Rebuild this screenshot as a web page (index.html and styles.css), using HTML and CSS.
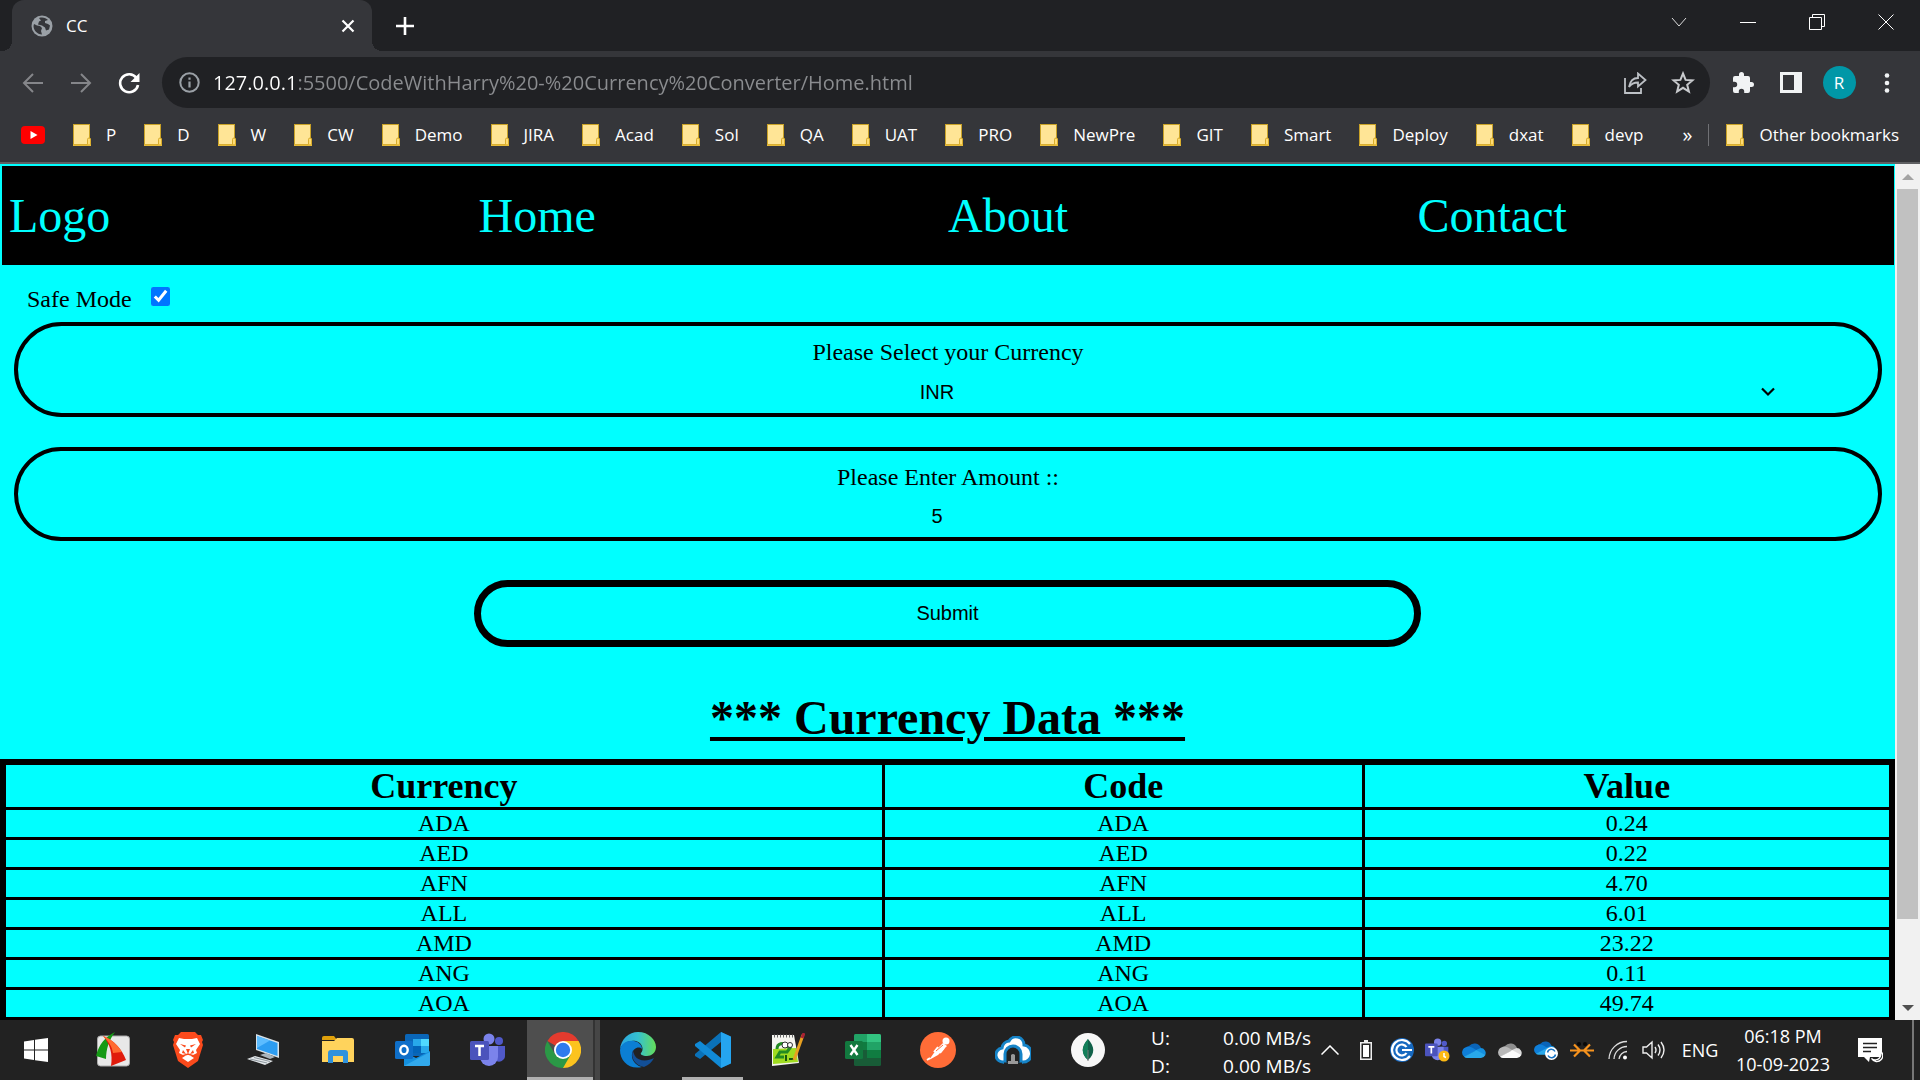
FILE: index.html
```html
<!DOCTYPE html>
<html lang="en">
<head>
<meta charset="utf-8">
<title>CC</title>
<link rel="stylesheet" href="styles.css">
</head>
<body>
<svg class="defs" aria-hidden="true">
  <symbol id="folder" viewBox="0 0 18 22">
    <path d="M0 0h17v14l1 1v7H0z" fill="#c9a227"/>
    <path d="M1 1h15v13.500l-1.500 1V20H1z" fill="#ffe596"/>
    <path d="M14.500 21v-5.500q0-1.500 1.500-1.500t1.500 1.500V21z" fill="#ffdc73" stroke="#d8ac2c"/>
    <path d="M0 20.500h18V22H0z" fill="#e8bc3a"/>
  </symbol>
  <symbol id="onedrive" viewBox="0 0 24 16">
    <path d="M7 4a7 7 0 0 1 12 2l-7 5-9-4.500A6 6 0 0 1 7 4z" fill="var(--c1)"/>
    <path d="M5 5a6 6 0 0 1 5 .5l5 3-12.500 6.500A5.500 5.500 0 0 1 5 5z" fill="var(--c2)"/>
    <path d="M13 8.500l5.500-2.500a5 5 0 0 1 4.500 7.500l-9-2z" fill="var(--c3)"/>
    <path d="M2 14.700L14.500 8.200l8.800 4.800A5 5 0 0 1 19 16H5a5 5 0 0 1-3-1.300z" fill="var(--c4)"/>
  </symbol>
  <symbol id="teams" viewBox="0 0 36 34">
    <circle cx="29" cy="8" r="4" fill="#5059c9"/>
    <path d="M23 13h12v9a6 6 0 0 1-10 5z" fill="#5059c9"/>
    <circle cx="19" cy="6" r="5.500" fill="#7b83eb"/>
    <path d="M10 13h18v11a9 9 0 0 1-18 0z" fill="#7b83eb"/>
    <rect y="8" width="19" height="19" rx="1.500" fill="#4b53bc"/>
    <path d="M5 13h9M9.500 13v10" stroke="#fff" stroke-width="2.500"/>
  </symbol>
</svg>

<div class="screen">
<header class="browser">
  <div class="tabstrip">
    <div class="tab">
      <svg width="22" height="22" viewBox="0 0 22 22"><circle cx="11" cy="11" r="10.500" fill="#9aa0a6"/><path d="M3 9c2 1 4 2 6 2l2 2-1 3 1 3.500C6 19.500 2.500 15 2.500 11zM8 3c4-1 7 0 9 2l-3 1v2l3 1 2 1.500-1 4-3 1-1-3-3-2-4-1 1-3 2-1z" fill="#35363a"/></svg>
      <span class="tab-title">CC</span>
      <button class="plain" aria-label="Close tab"><svg width="14" height="14" viewBox="0 0 14 14"><path d="M1.500 1.500l11 11M12.500 1.500l-11 11" stroke="#fff" stroke-width="2.200"/></svg></button>
    </div>
    <button class="plain newtab" aria-label="New tab"><svg width="18" height="18" viewBox="0 0 18 18"><path d="M9 0v18M0 9h18" stroke="#fff" stroke-width="2.600"/></svg></button>
    <div class="winbtns">
      <button class="plain" aria-label="Search tabs"><svg width="16" height="16" viewBox="0 0 16 16"><path d="M1 4l7 8 7-8" fill="none" stroke="#ddd"/></svg></button>
      <button class="plain" aria-label="Minimize"><svg width="16" height="16" viewBox="0 0 16 16"><path d="M0 8.500h16" stroke="#fff"/></svg></button>
      <button class="plain" aria-label="Restore"><svg width="16" height="16" viewBox="0 0 16 16"><path d="M.5 3.500h12v12H.5zM3.500 3V.5h12v12H13" fill="none" stroke="#fff"/></svg></button>
      <button class="plain" aria-label="Close"><svg width="16" height="16" viewBox="0 0 16 16"><path d="M.5.5l15 15M15.500.5l-15 15" stroke="#fff"/></svg></button>
    </div>
  </div>

  <div class="toolbar">
    <button class="plain tool" aria-label="Back"><svg width="22" height="22" viewBox="0 0 22 22"><path d="M21 11H3M11 2L2 11l9 9" fill="none" stroke="#85868a" stroke-width="2"/></svg></button>
    <button class="plain tool" aria-label="Forward"><svg width="22" height="22" viewBox="0 0 22 22"><path d="M1 11h18M11 2l9 9-9 9" fill="none" stroke="#85868a" stroke-width="2"/></svg></button>
    <button class="plain tool" aria-label="Reload"><svg width="22" height="22" viewBox="0 0 22 22"><path d="M18.500 6A9 9 0 1 0 20 13" fill="none" stroke="#fff" stroke-width="2.600"/><path d="M21.500 1v9h-9z" fill="#fff"/></svg></button>
    <div class="address">
      <svg width="21" height="21" viewBox="0 0 21 21"><circle cx="10.500" cy="10.500" r="9.200" fill="none" stroke="#9aa0a6" stroke-width="2"/><path d="M10.500 9.500v6M10.500 5.500v2.200" stroke="#9aa0a6" stroke-width="2.200"/></svg>
      <input class="url" type="text" aria-label="Address" value="127.0.0.1:5500/CodeWithHarry%20-%20Currency%20Converter/Home.html">
      <button class="plain" aria-label="Share"><svg width="24" height="22" viewBox="0 0 24 22"><path d="M2 6v15h16v-5" fill="none" stroke="#bdc1c6" stroke-width="1.800"/><path d="M6 15C7 9 10 6 15 6V1.500L22.500 8 15 14.500V10.500C11 10.500 8 12 6 15z" fill="none" stroke="#bdc1c6" stroke-width="1.800"/></svg></button>
      <button class="plain" aria-label="Bookmark this page"><svg width="24" height="24" viewBox="0 0 24 24"><path d="M12 2.500l2.600 6.400 6.900.5-5.300 4.400 1.700 6.700-5.900-3.700-5.900 3.700 1.700-6.700-5.300-4.400 6.900-.5z" fill="none" stroke="#c8cacd" stroke-width="2"/></svg></button>
    </div>
    <button class="plain tool" aria-label="Extensions"><svg width="24" height="24" viewBox="0 0 24 24"><path d="M20.500 11H19V7a2 2 0 0 0-2-2h-4V3.500a2.500 2.500 0 0 0-5 0V5H4a2 2 0 0 0-2 2v3.800h1.500a2.700 2.700 0 0 1 0 5.400H2V20a2 2 0 0 0 2 2h3.800v-1.500a2.700 2.700 0 0 1 5.400 0V22H17a2 2 0 0 0 2-2v-4h1.500a2.500 2.500 0 0 0 0-5z" fill="#f1f3f4"/></svg></button>
    <button class="plain tool" aria-label="Side panel"><svg width="22" height="21" viewBox="0 0 22 21"><path d="M0 0h22v21H0zM3 3v15h11V3z" fill="#f1f3f4" fill-rule="evenodd"/></svg></button>
    <button class="plain tool" aria-label="Profile"><span class="avatar">R</span></button>
    <button class="plain tool" aria-label="Menu"><svg width="6" height="20" viewBox="0 0 6 20"><g fill="#f1f3f4"><circle cx="3" cy="2.500" r="2.300"/><circle cx="3" cy="10" r="2.300"/><circle cx="3" cy="17.500" r="2.300"/></g></svg></button>
  </div>

  <nav class="bookmarks" aria-label="Bookmarks">
    <a href="#" aria-label="YouTube"><svg width="24" height="18" viewBox="0 0 24 18"><rect width="24" height="18" rx="4" fill="#f00"/><path d="M9.500 5l7 4-7 4z" fill="#fff"/></svg></a>
    <a href="#"><svg class="fold"><use href="#folder"/></svg>P</a>
    <a href="#"><svg class="fold"><use href="#folder"/></svg>D</a>
    <a href="#"><svg class="fold"><use href="#folder"/></svg>W</a>
    <a href="#"><svg class="fold"><use href="#folder"/></svg>CW</a>
    <a href="#"><svg class="fold"><use href="#folder"/></svg>Demo</a>
    <a href="#"><svg class="fold"><use href="#folder"/></svg>JIRA</a>
    <a href="#"><svg class="fold"><use href="#folder"/></svg>Acad</a>
    <a href="#"><svg class="fold"><use href="#folder"/></svg>Sol</a>
    <a href="#"><svg class="fold"><use href="#folder"/></svg>QA</a>
    <a href="#"><svg class="fold"><use href="#folder"/></svg>UAT</a>
    <a href="#"><svg class="fold"><use href="#folder"/></svg>PRO</a>
    <a href="#"><svg class="fold"><use href="#folder"/></svg>NewPre</a>
    <a href="#"><svg class="fold"><use href="#folder"/></svg>GIT</a>
    <a href="#"><svg class="fold"><use href="#folder"/></svg>Smart</a>
    <a href="#"><svg class="fold"><use href="#folder"/></svg>Deploy</a>
    <a href="#"><svg class="fold"><use href="#folder"/></svg>dxat</a>
    <a href="#"><svg class="fold"><use href="#folder"/></svg>devp</a>
    <div class="bm-end">
      <button class="plain more" aria-label="More bookmarks">»</button>
      <a class="other" href="#"><svg class="fold"><use href="#folder"/></svg>Other bookmarks</a>
    </div>
  </nav>
</header>

<div class="viewport">
  <main class="page">
    <nav class="sitenav">
      <a href="#">Logo</a><a href="#">Home</a><a href="#">About</a><a href="#">Contact</a>
    </nav>
    <form>
      <div class="safe"><label for="safe">Safe Mode</label><input id="safe" type="checkbox" checked></div>
      <div class="field">
        <label for="cur">Please Select your Currency</label>
        <div class="selectbox">
          <select id="cur"><option>INR</option></select>
          <svg width="14" height="10" viewBox="0 0 14 10"><path d="M1 1.500l6 6 6-6" fill="none" stroke="#000" stroke-width="2.200"/></svg>
        </div>
      </div>
      <div class="field">
        <label for="amt">Please Enter Amount ::</label>
        <input id="amt" type="text" inputmode="numeric" value="5">
      </div>
      <button class="submit" type="submit">Submit</button>
    </form>
    <h1>*** Currency Data ***</h1>
    <table>
      <colgroup><col class="c-name"><col class="c-code"><col class="c-value"></colgroup>
      <thead><tr><th>Currency</th><th>Code</th><th>Value</th></tr></thead>
      <tbody>
        <tr><td>ADA</td><td>ADA</td><td>0.24</td></tr>
        <tr><td>AED</td><td>AED</td><td>0.22</td></tr>
        <tr><td>AFN</td><td>AFN</td><td>4.70</td></tr>
        <tr><td>ALL</td><td>ALL</td><td>6.01</td></tr>
        <tr><td>AMD</td><td>AMD</td><td>23.22</td></tr>
        <tr><td>ANG</td><td>ANG</td><td>0.11</td></tr>
        <tr><td>AOA</td><td>AOA</td><td>49.74</td></tr>
      </tbody>
    </table>
  </main>
  <div class="scrollbar" aria-hidden="true">
    <svg width="12" height="6" viewBox="0 0 12 6"><path d="M0 6l6-6 6 6z" fill="#a3a3a3"/></svg>
    <div class="track"><div class="thumb"></div></div>
    <svg width="12" height="6" viewBox="0 0 12 6"><path d="M0 0h12L6 6z" fill="#505050"/></svg>
  </div>
</div>

<footer class="taskbar">
  <div class="apps">
    <button class="plain app start" aria-label="Start"><svg width="24" height="24" viewBox="0 0 24 24"><path d="M0 3.400l10-1.400v9.500H0zM11 1.800L24 0v11.500H11zM0 12.500h10V22L0 20.600zM11 12.500h13V24l-13-1.800z" fill="#fff"/></svg></button>
    <button class="plain app" aria-label="Screen capture"><svg width="36" height="36" viewBox="0 0 36 36"><rect x="2.500" y="4" width="32" height="30" rx="3" fill="#e8e8e8" stroke="#aaa"/><path d="M20 0C10 5 4 12 1 24l10 3C11 17 14 8 20 0z" fill="#159a15"/><path d="M8 4c11 4 19 13 23 24l-15 6c2-12-1-22-8-30z" fill="#e01b0c"/><path d="M8 4c5 5 9 10 10 17l9-1C23 13 16 7 8 4z" fill="#ff6a30"/></svg></button>
    <button class="plain app" aria-label="Brave"><svg width="32" height="36" viewBox="0 0 32 36"><path d="M9 0h14l3 3 3 0 2 5-1 2 1 3-5 16-10 7-10-7L1 13l1-3L1 8l2-5h3z" fill="#fb4a1c"/><path d="M7 6l5 1h8l5-1 3 6-4 6 1 3-6 3 3 2-6 4-6-4 3-2-6-3 1-3-4-6z" fill="#fff"/><path d="M8 12l6 1.500-1 2zM24 12l-6 1.500 1 2zM11 18l3 4-4-1zM21 18l-3 4 4-1zM14 17h4l-2 5z" fill="#fb4a1c"/><path d="M10 24l6-2 6 2" fill="none" stroke="#fb4a1c" stroke-width="1.500"/></svg></button>
    <button class="plain app" aria-label="Computer"><svg width="34" height="34" viewBox="0 0 34 34"><path d="M10 1l23 8v16L10 17z" fill="#d8e2e8"/><path d="M11 3l20.500 7v13L11 16z" fill="#2c9df2"/><path d="M11 3l13 4.500L11 15z" fill="#5cbcff"/><path d="M14 22l6-2 9 4-5 2z" fill="#aab4bb"/><path d="M1 26l8-3 18 5-8 4z" fill="#e3e7ea"/><path d="M4 26l17 4M8 24.500l16 4" stroke="#8c969c"/></svg></button>
    <button class="plain app" aria-label="File Explorer"><svg width="32" height="28" viewBox="0 0 32 28"><path d="M0 2a2 2 0 0 1 2-2h10l3 4H0z" fill="#e0a10b"/><path d="M0 5h12l3-3h15a2 2 0 0 1 2 2v22H0z" fill="#ffd35c"/><path d="M6 27V17a3 3 0 0 1 3-3h14a3 3 0 0 1 3 3v10h-5v-7H11v7z" fill="#2f92dd"/></svg></button>
    <button class="plain app" aria-label="Outlook"><svg width="36" height="32" viewBox="0 0 36 32"><rect x="10" width="24" height="22" rx="1.500" fill="#0a66b8"/><path d="M18 5h8v7h-8z" fill="#28a8ea"/><path d="M26 5h8v7h-8z" fill="#50d9ff"/><path d="M18 12h8v7h-8z" fill="#0364b8"/><path d="M26 12h8v7h-8z" fill="#28a8ea"/><path d="M9 18l12 6 14-7v13a2 2 0 0 1-2 2H9z" fill="#1490df"/><path d="M9 32l26-14v13l-2 1z" fill="#32a9ec"/><rect y="7" width="18" height="18" rx="1.500" fill="#0f6fc9"/><ellipse cx="9" cy="16" rx="3.700" ry="4.300" fill="none" stroke="#fff" stroke-width="2.400"/></svg></button>
    <button class="plain app" aria-label="Teams"><svg width="36" height="34"><use href="#teams"/></svg></button>
    <button class="plain app chrome" aria-label="Chrome"><svg width="36" height="36" viewBox="0 0 36 36"><path d="M18 18L2.400 9A18 18 0 0 1 33.600 9z" fill="#e33b2e"/><path d="M18 18L33.600 9A18 18 0 0 1 18 36z" fill="#fcc31e"/><path d="M2.400 9A18 18 0 0 0 18 36l7.800-13.500H10.200z" fill="#2b9846"/><path d="M18 9h15.600L25.800 22.500z" fill="#fcc31e"/><circle cx="18" cy="18" r="9" fill="#fff"/><circle cx="18" cy="18" r="7.200" fill="#2f7bed"/></svg></button>
    <button class="plain app" aria-label="Edge"><svg width="36" height="36" viewBox="0 0 36 36"><defs><linearGradient id="e1"><stop stop-color="#2aa5e0"/><stop offset=".5" stop-color="#35c1d0"/><stop offset="1" stop-color="#65dd58"/></linearGradient></defs><path d="M0 17C1 7 9 0 18 0c11 0 18 8 18 15 0 6-5 9-9 9-5 0-7-2-6-3 3-3 2-10-5-12C9 8 3 11 0 17z" fill="url(#e1)"/><path d="M0 18C1 11 8 8 14 9c5 1 8 4 8 8-3-3-9-1-10 5-1 7 5 12 10 13C9 38 0 29 0 18z" fill="#0b7fd4"/><path d="M13 18c-3 8 2 15 11 17 5-2 8-5 10-9-7 4-16 3-19-2-1-2-2-4-2-6z" fill="#124f97"/></svg></button>
    <button class="plain app running" aria-label="Visual Studio Code"><svg width="36" height="36" viewBox="0 0 36 36"><path d="M26 0l9 4.500v27L26 36V10L5 27 0 24v-2z" fill="#0a71b8"/><path d="M26 36L0 14v-2l5-3 21 17z" fill="#118ad6"/><path d="M26 0l10 4.500v27L26 36z" fill="#25a5f0"/></svg></button>
    <button class="plain app" aria-label="Notepad++"><svg width="34" height="34" viewBox="0 0 34 34"><path d="M1 2h22l5 28L1 33z" fill="#f5f5f0"/><path d="M2 16l23-1 2 14L2 31z" fill="#9fdc20"/><path d="M3 3h20" stroke="#666" stroke-width="3" stroke-dasharray="1 2"/><path d="M6 16c0-6 7-7 9-3l4 2-3 4H9l-3 5h7" fill="none" stroke="#228b22" stroke-width="3"/><path d="M15 22v6M18 26h6" stroke="#17580e" stroke-width="2"/><circle cx="14" cy="12" r="3" fill="#fff" stroke="#333"/><circle cx="19" cy="12" r="2.500" fill="#fff" stroke="#333"/><path d="M32 2L23 27" stroke="#e8a020" stroke-width="3"/><path d="M33 0l-2 5" stroke="#a23" stroke-width="3"/></svg></button>
    <button class="plain app" aria-label="Excel"><svg width="36" height="32" viewBox="0 0 36 32"><rect x="9" width="27" height="32" rx="1.500" fill="#185c37"/><path d="M9 1.500Q9 0 10.500 0H22v8H9z" fill="#21a366"/><path d="M22 0h12.500Q36 0 36 1.500V8H22z" fill="#33c481"/><path d="M9 8h13v8H9z" fill="#107c41"/><path d="M22 8h14v8H22z" fill="#21a366"/><path d="M22 16h14v8H22z" fill="#107c41"/><rect y="7" width="18" height="18" rx="1.500" fill="#12793f"/><path d="M5.500 11l7 10M12.500 11l-7 10" stroke="#fff" stroke-width="2.400"/></svg></button>
    <button class="plain app" aria-label="Postman"><svg width="36" height="36" viewBox="0 0 36 36"><circle cx="18" cy="18" r="18" fill="#ff6c37"/><circle cx="26" cy="9" r="3.500" fill="#fff"/><path d="M23 11l4 3-9 9-9 5 7-10z" fill="#fff"/><path d="M10 26l-3 2M18 15l-4 5M24 16l-4 5" stroke="#fff" stroke-width="2"/><path d="M16 19l7-6" stroke="#ff6c37"/></svg></button>
    <button class="plain app" aria-label="Cloud tunnel"><svg width="36" height="28" viewBox="0 0 36 28"><path d="M9 26a7 7 0 0 1-2-14A8 8 0 0 1 14 5a8 8 0 0 1 15 4 8 8 0 0 1-2 17z" fill="#fff" stroke="#1684c8" stroke-width="3"/><path d="M10 28V18a8 8 0 0 1 16 0v10z" fill="#222" stroke="#1684c8" stroke-width="3"/><path d="M9 26.500h18V28H9z" fill="#222"/><path d="M16 19q2-2 4 0v6h3v3H13v-3h3z" fill="#999"/></svg></button>
    <button class="plain app" aria-label="MongoDB Compass"><svg width="34" height="34" viewBox="0 0 34 34"><circle cx="17" cy="17" r="17" fill="#f7f7f7"/><path d="M17 6c7 8 7 15 0 21-7-6-7-13 0-21z" fill="#116149"/><path d="M17 6v21c-7-6-7-13 0-21z" fill="#13805a"/><path d="M17 17v11" stroke="#777"/></svg></button>
  </div>

  <div class="tray">
    <div class="net"><span>U:</span><span>0.00 MB/s</span><span>D:</span><span>0.00 MB/s</span></div>
    <button class="plain cell" aria-label="Show hidden icons"><svg width="18" height="10" viewBox="0 0 18 10"><path d="M.5 9.500L9 1l8.500 8.500" fill="none" stroke="#fff" stroke-width="1.500"/></svg></button>
    <button class="plain cell" aria-label="Battery"><svg width="12" height="20" viewBox="0 0 12 20"><path d="M4 0h4v2h4v18H0V2h4zM1.500 3.500v15h9v-15z" fill="#eee" fill-rule="evenodd"/><path d="M3 5h6v12H3z" fill="#fff"/></svg></button>
    <button class="plain cell" aria-label="Sync client"><svg width="24" height="24" viewBox="0 0 24 24"><circle cx="12" cy="12" r="12" fill="#1769c0"/><path d="M20 6A10 10 0 1 0 20 18M22 12H12M16.500 9a5.500 5.500 0 1 0 0 6" fill="none" stroke="#fff" stroke-width="2.200"/></svg></button>
    <button class="plain cell" aria-label="Teams status"><svg width="26" height="24" viewBox="0 0 26 24"><use href="#teams" width="24" height="23"/><circle cx="19" cy="18" r="5.500" fill="#fdb913"/><path d="M19 15v3.500l2 1" fill="none" stroke="#fff" stroke-width="1.500"/></svg></button>
    <button class="plain cell" aria-label="OneDrive"><svg class="blue" width="24" height="16" viewBox="0 0 24 16"><use href="#onedrive" width="24" height="16"/></svg></button>
    <button class="plain cell" aria-label="OneDrive personal"><svg class="grey" width="24" height="16" viewBox="0 0 24 16"><use href="#onedrive" width="24" height="16"/></svg></button>
    <button class="plain cell" aria-label="OneDrive syncing"><svg class="blue" width="24" height="20" viewBox="0 0 24 20"><use href="#onedrive" width="22" height="15"/><circle cx="17.500" cy="13.500" r="6.500" fill="#fff"/><path d="M13.500 12.500a4 4 0 0 1 7.500-1M21.500 14.500a4 4 0 0 1-7.500 1" fill="none" stroke="#1774c4" stroke-width="1.500"/></svg></button>
    <button class="plain cell" aria-label="Crossed arrows"><svg width="24" height="16" viewBox="0 0 24 16"><circle cx="9" cy="2" r="2" fill="#080808"/><circle cx="15" cy="2" r="2" fill="#080808"/><path d="M0 8.500h24M4 2.500l6 6-6 6M20 2.500l-6 6 6 6" fill="none" stroke="#f7931e" stroke-width="2.200"/></svg></button>
    <button class="plain cell" aria-label="Wi-Fi"><svg width="20" height="20" viewBox="0 0 20 20"><path d="M1 19A18 18 0 0 1 19 1.500M6 19A13 13 0 0 1 19 6.500M11 19a8.500 8.500 0 0 1 8-7.500" fill="none" stroke="#ddd" stroke-width="1.300"/><circle cx="17" cy="17.500" r="2" fill="#fff"/></svg></button>
    <button class="plain cell" aria-label="Volume"><svg width="24" height="20" viewBox="0 0 24 20"><path d="M1 7h3.500L10 2v16l-5.500-5H1zM13 7q2 3 0 6M16 4.500q4 5.500 0 11M19 2q6 8 0 16" fill="none" stroke="#eee" stroke-width="1.400"/></svg></button>
    <button class="plain lang">ENG</button>
    <div class="clock"><span>06:18 PM</span><span>10-09-2023</span></div>
    <button class="plain notes" aria-label="Notifications"><svg width="25" height="25" viewBox="0 0 25 25"><path d="M0 0h24v19H12l-1 5-5-5H0z" fill="#fff"/><path d="M5 5.500h14M5 9.500h14M5 13.500h8" stroke="#222" stroke-width="1.300"/><path d="M21 12a5.500 5.500 0 0 1-7.500 8.500A6 6 0 1 0 21 12z" fill="#222" stroke="#fff" stroke-width="1.300"/></svg></button>
    <span class="peek"></span>
  </div>
</footer>
</div>
</body>
</html>
```
FILE: styles.css
```css
* { box-sizing: border-box; }
body { margin: 0; font-family: "Liberation Serif", "Times New Roman", serif; color: #000; }
svg { display: block; flex: none; }
a { color: inherit; text-decoration: none; }
.defs { position: absolute; width: 0; height: 0; }
.plain { display: flex; align-items: center; justify-content: center; padding: 0; border: 0; background: none; color: inherit; font: inherit; }
.screen { display: flex; flex-direction: column; height: 100vh; overflow: hidden; }

/* browser chrome */
.browser { flex: none; background: #35363a; color: #fff; font: 17px "Open Sans", "Noto Sans", sans-serif; border-bottom: 2px solid #5f6063; }
.tabstrip { display: flex; height: 51px; background: #202124; padding-left: 12px; }
.tab { position: relative; display: flex; align-items: center; gap: 13px; width: 360px; padding: 0 17px 0 19px; background: #35363a; border-radius: 12px 12px 0 0; }
.tab::before, .tab::after { content: ""; position: absolute; bottom: 0; width: 10px; height: 10px; }
.tab::before { right: 100%; background: radial-gradient(circle at 0 0, #202124 10px, #35363a 10px); }
.tab::after { left: 100%; background: radial-gradient(circle at 100% 0, #202124 10px, #35363a 10px); }
.tab-title { flex: 1; }
.newtab { width: 66px; }
.winbtns { display: flex; margin-left: auto; height: 43px; }
.winbtns button { width: 69px; }
.toolbar { display: flex; align-items: center; height: 63px; padding: 0 9px; }
.tool { width: 48px; height: 48px; }
.address { flex: 1; display: flex; align-items: center; gap: 24px; height: 51px; margin: 0 9px; padding: 0 15px 0 17px; border-radius: 26px; background: #202124; }
.url { flex: 1; min-width: 0; margin-left: -11px; padding: 0; border: 0; outline: 0; font: 20px "Open Sans", "Noto Sans", sans-serif; color: transparent; background: linear-gradient(to right, #fff 85px, #8b8d90 85px); -webkit-background-clip: text; background-clip: text; }
.avatar { display: flex; align-items: center; justify-content: center; width: 33px; height: 33px; border-radius: 50%; background: #0097a7; color: #fff; font-size: 17px; }
.bookmarks { display: flex; align-items: center; gap: 28px; height: 48px; padding: 0 21px 6px; line-height: 22px; white-space: nowrap; }
.bookmarks a { display: flex; align-items: center; gap: 15px; }
.fold { width: 18px; height: 22px; }
.bm-end { display: flex; align-items: center; margin-left: auto; }
.more { padding: 0 16px 0 10px; font-size: 20px; line-height: 24px; }
.other { padding-left: 17px; border-left: 1px solid #707175; }

/* page */
.viewport { flex: 1; min-height: 0; display: flex; }
.page { flex: 1; overflow: hidden; background: #0ff; }
.sitenav { display: grid; grid-template-columns: repeat(4, 1fr); align-items: center; height: 99px; margin: 2px 1px 0 2px; padding: 0 7px; background: #000; color: #0ff; font-size: 48px; }
.safe { display: flex; align-items: center; gap: 19px; padding: 20px 27px 9px; font-size: 24px; line-height: 28px; }
.safe input { width: 19px; height: 19px; margin: 0 0 5px; accent-color: #0075ff; }
.field { display: flex; flex-direction: column; align-items: center; gap: 11px; margin: 0 13px 30px 14px; padding: 12px 0 7px; border: 4px solid #000; border-radius: 48px; font-size: 24px; line-height: 28px; }
.selectbox { display: flex; align-items: center; width: 90%; padding-right: 10px; }
.field select, .field input { appearance: none; border: 0; outline: 0; padding: 0; margin: 0; background: transparent; color: #000; text-align: center; font: 20px "Liberation Sans", Arial, sans-serif; height: 28px; }
.field select { flex: 1; text-align-last: center; height: 29px; padding-left: 2px; }
.field input { width: 90%; padding-right: 22px; }
.submit { display: block; width: 50%; height: 67px; margin: 39px auto 43px; padding: 0; border: 7px solid #000; border-radius: 34px; background: transparent; color: #000; font: 20px "Liberation Sans", Arial, sans-serif; }
h1 { margin: 0 0 14px; font-size: 48px; line-height: 55px; text-align: center; text-decoration: underline; }
table { width: 100%; table-layout: fixed; border-collapse: collapse; border: 6px solid #000; border-bottom-width: 3px; text-align: center; font-size: 24px; line-height: 27px; }
th, td { padding: 0; border: 3px solid #000; }
th { font-size: 36px; line-height: 42px; }
.c-name { width: 46.6%; }
.c-code { width: 25.4%; }
.scrollbar { display: flex; flex-direction: column; align-items: center; width: 25px; padding: 10px 0 9px; background: #f1f1f1; }
.track { flex: 1; width: 21px; margin: 9px 0; }
.thumb { height: 90.4%; background: #c1c1c1; }

/* taskbar */
.taskbar { flex: none; display: flex; height: 60px; background: #222; color: #fff; font: 18px "Open Sans", "Noto Sans", sans-serif; white-space: nowrap; }
.apps { display: flex; }
.app { width: 75px; }
.start { padding-right: 3px; }
.chrome { background: linear-gradient(#b0b0b0, #b0b0b0) 2px 100% / 66px 3px no-repeat, linear-gradient(to right, transparent 2px, #4e4e4e 2px, #4e4e4e 68px, #333 68px, #333 70px, #464646 70px); }
.running { background: linear-gradient(#b0b0b0, #b0b0b0) 50% 100% / 61px 3px no-repeat; }
.tray { display: flex; margin-left: auto; }
.net { display: grid; grid-template-columns: 72px auto; align-content: center; font-size: 19px; line-height: 28px; padding: 3px 1px 0 0; }
.cell { width: 36px; }
.blue { --c1: #0a64b8; --c2: #0f7fd9; --c3: #1490df; --c4: #28a8ea; }
.grey { --c1: #8f8f8f; --c2: #b8b8b8; --c3: #dcdcdc; --c4: #fafafa; }
.lang { width: 56px; }
.clock { display: flex; flex-direction: column; justify-content: center; align-items: center; width: 110px; line-height: 28px; }
.notes { width: 64px; }
.peek { width: 2px; margin: 0 6px 0 10px; background: #777; }
```
